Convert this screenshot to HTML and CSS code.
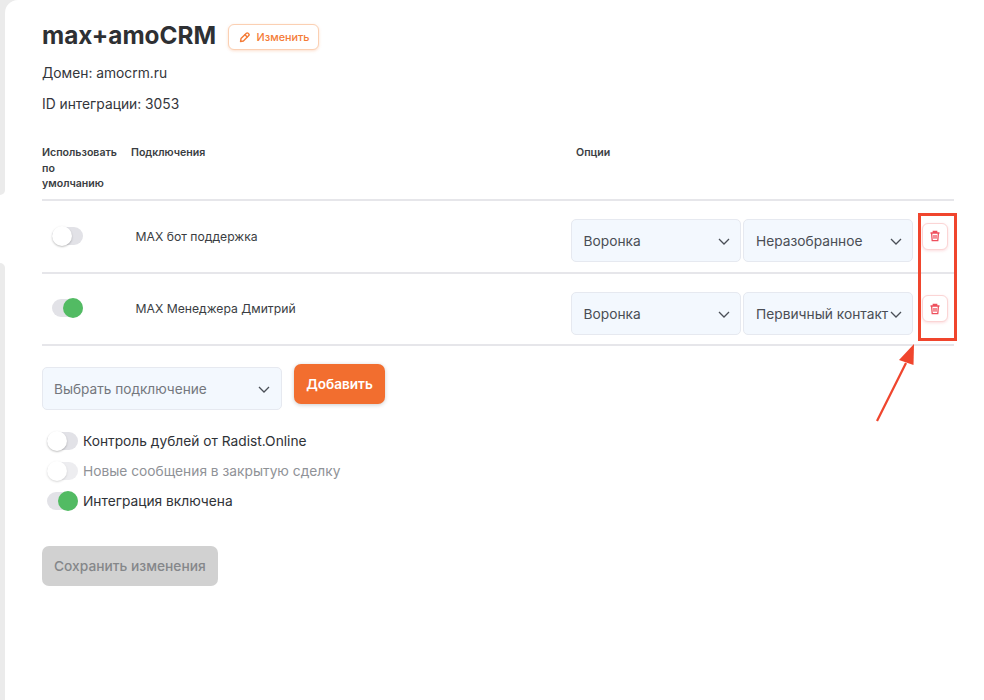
FILE: index.html
```html
<!DOCTYPE html>
<html lang="ru">
<head>
<meta charset="utf-8">
<title>max+amoCRM</title>
<link rel="stylesheet" href="styles.css">
</head>
<body>
<div class="rail rail-top"></div>
<div class="rail rail-bottom"></div>
<main class="page">
  <div class="title-row">
    <h1 class="title">max+amoCRM</h1>
    <button class="edit-btn" type="button">
      <svg class="edit-icon" viewBox="0 0 12 12" width="12" height="12" fill="none" stroke="#f47b36" stroke-width="1.4" stroke-linejoin="round" stroke-linecap="round"><path d="M1.5 10.5 2 7.6 7.4 2.2a1.2 1.2 0 0 1 1.7 0l.7.7a1.2 1.2 0 0 1 0 1.7L4.4 10z"/><path d="M6 3.8 8.2 6"/></svg>
      <span>Изменить</span>
    </button>
  </div>
  <p class="meta meta-domain">Домен: amocrm.ru</p>
  <p class="meta meta-id">ID интеграции: 3053</p>

  <div class="table-head">
    <div class="col-default">Использовать по умолчанию</div>
    <div class="col-conn">Подключения</div>
    <div class="col-opts">Опции</div>
  </div>

  <div class="row">
    <div class="cell-toggle"><span class="toggle"><span class="knob"></span></span></div>
    <div class="cell-name">MAX бот поддержка</div>
    <div class="select select-a"><span>Воронка</span><svg class="chev" viewBox="0 0 12 7" width="12" height="7"><path d="M1 1l5 5 5-5" fill="none" stroke="#4a4f57" stroke-width="1.3"/></svg></div>
    <div class="select select-b"><span>Неразобранное</span><svg class="chev" viewBox="0 0 12 7" width="12" height="7"><path d="M1 1l5 5 5-5" fill="none" stroke="#4a4f57" stroke-width="1.3"/></svg></div>
    <button class="del-btn" type="button"><svg viewBox="0 0 12 12" width="12" height="12" fill="none" stroke="#ee4f5c" stroke-width="1.3"><path d="M1.5 3h9M4.3 3V1.5h3.4V3M2.6 3l.6 7.7h5.6L9.4 3M5 5v3.8M7 5v3.8"/></svg></button>
  </div>
  <div class="row">
    <div class="cell-toggle"><span class="toggle on"><span class="knob"></span></span></div>
    <div class="cell-name">MAX Менеджера Дмитрий</div>
    <div class="select select-a"><span>Воронка</span><svg class="chev" viewBox="0 0 12 7" width="12" height="7"><path d="M1 1l5 5 5-5" fill="none" stroke="#4a4f57" stroke-width="1.3"/></svg></div>
    <div class="select select-b"><span>Первичный контакт</span><svg class="chev" viewBox="0 0 12 7" width="12" height="7"><path d="M1 1l5 5 5-5" fill="none" stroke="#4a4f57" stroke-width="1.3"/></svg></div>
    <button class="del-btn" type="button"><svg viewBox="0 0 12 12" width="12" height="12" fill="none" stroke="#ee4f5c" stroke-width="1.3"><path d="M1.5 3h9M4.3 3V1.5h3.4V3M2.6 3l.6 7.7h5.6L9.4 3M5 5v3.8M7 5v3.8"/></svg></button>
  </div>

  <div class="add-row">
    <div class="select select-add"><span>Выбрать подключение</span><svg class="chev" viewBox="0 0 12 7" width="12" height="7"><path d="M1 1l5 5 5-5" fill="none" stroke="#4a4f57" stroke-width="1.3"/></svg></div>
    <button class="add-btn" type="button">Добавить</button>
  </div>

  <div class="switches">
    <div class="switch-row"><span class="toggle"><span class="knob"></span></span><span>Контроль дублей от Radist.Online</span></div>
    <div class="switch-row disabled"><span class="toggle"><span class="knob"></span></span><span>Новые сообщения в закрытую сделку</span></div>
    <div class="switch-row"><span class="toggle on"><span class="knob"></span></span><span>Интеграция включена</span></div>
  </div>

  <button class="save-btn" type="button">Сохранить изменения</button>
</main>

<div class="callout"></div>
<svg class="arrow" viewBox="0 0 60 90" width="60" height="90"><path d="M2 83 31 25" stroke="#f0452d" stroke-width="2.2" fill="none"/><path d="M39 6 38.500 27 24 22z" fill="#f0452d"/></svg>
</body>
</html>
```
FILE: styles.css
```css
* { box-sizing: border-box; }
html, body { margin: 0; height: 100%; }
body {
  background: #fff;
  font-family: Inter, "Noto Sans", sans-serif;
  color: #2f3237;
  overflow: hidden;
  width: 984px;
  height: 700px;
  position: relative;
}
.rail { position: absolute; left: 0; width: 5px; background: #ebebeb; }
.rail-top { top: 0; height: 195px; width: 5px; border-bottom-right-radius: 5px; }
.rail-top::before { content: ""; position: absolute; left: 0; top: 0; width: 18px; height: 18px; background: #ebebeb; }
.rail-top::after { content: ""; position: absolute; left: 5px; top: 0; width: 14px; height: 18px; background: #fff; border-top-left-radius: 13px; }
.rail-bottom { top: 263px; bottom: 0; border-top-right-radius: 5px; }
.page { padding: 20px 30px 0 42px; width: 984px; }
.title-row { display: flex; align-items: center; gap: 11.5px; height: 30px; }
.title { margin: 0; font-size: 24.3px; font-weight: 700; line-height: 30px; color: #2e3033; }
.edit-btn {
  display: flex; align-items: center; gap: 6px;
  height: 26px; width: 91px; margin-top: 4px; padding: 0 0 0 10px;
  background: #fff; border: 1px solid #fbd0b3; border-radius: 6px;
  box-shadow: 0 1px 3px rgba(244,123,54,.25);
  color: #f47b36; font: 500 10.8px Inter, sans-serif;
}
.meta { margin: 0; font-size: 13.8px; line-height: 20px; color: #33363b; }
.meta-domain { margin-top: 13px; }
.meta-id { margin-top: 11px; }
.table-head {
  display: flex; width: 912px; height: 57px; margin-top: 30px; padding-top: 1px;
  border-bottom: 2px solid #e6e6ea;
  font-size: 10.6px; font-weight: 600; line-height: 15.5px; color: #3a3d42;
}
.col-default { width: 89px; padding-right: 13px; }
.col-conn { width: 445px; }
.row {
  display: flex; align-items: center; width: 912px; height: 72.5px;
  border-bottom: 2px solid #e6e6ea; padding-top: 1px;
}
.cell-toggle { width: 93.5px; padding-left: 9.5px; display: flex; margin-top: -2px; }
.cell-name { width: 435.5px; font-size: 12.2px; color: #3a3d42; margin-top: -1px; }
.toggle { position: relative; display: inline-block; width: 31px; height: 18px; border-radius: 9px; background: #e2e2e7; flex: none; }
.knob { position: absolute; left: 0; top: -1px; width: 20px; height: 20px; border-radius: 50%; background: #fff; box-shadow: 0 1px 2px rgba(0,0,0,.25); }
.toggle.on .knob { left: 11px; background: #52bb63; box-shadow: none; }
.select {
  display: flex; align-items: center; justify-content: space-between;
  height: 43px; background: #f3f8fe; border: 1px solid #e6e9f0; border-radius: 5px;
  font-size: 13.75px; color: #4a4e55;
}
.row .select { margin-top: 8px; }
.row .select span { padding-top: 1px; }
.select-a { width: 169.5px; padding: 0 10px 0 11.5px; }
.select-b { width: 170px; margin-left: 2.5px; padding: 0 10px 0 12px; }
.chev { flex: none; margin-top: 2px; }
.del-btn {
  display: flex; align-items: center; justify-content: center;
  width: 26px; height: 27px; margin: -1px 0 0 8.5px; padding: 0;
  background: #fff; border: 1px solid #fbd5d5; border-radius: 6px;
  box-shadow: 0 1px 3px rgba(238,79,92,.2);
}
.add-row { display: flex; gap: 12px; margin-top: 18px; align-items: flex-start; }
.select-add { width: 240px; padding: 0 11px; color: #74777d; margin-top: 3px; font-size: 13.65px; }
.add-btn {
  width: 91px; height: 40px; background: #f26e2f; border: 0; border-radius: 7px;
  box-shadow: 0 1px 4px rgba(0,0,0,.2);
  color: #fff; font: 600 13.6px Inter, sans-serif;
}
.switches { margin-top: 21px; padding-left: 5px; display: flex; flex-direction: column; gap: 10px; }
.switch-row { display: flex; align-items: center; gap: 5px; height: 20px; font-size: 13.75px; color: #2f3237; }
.switch-row.disabled { color: #8f9297; }
.switch-row.disabled .toggle { opacity: .6; }
.save-btn {
  display: block; margin-top: 35px; width: 176px; height: 40px; padding: 0 0 0 12px;
  text-align: left;
  background: #d1d1d1; border: 0; border-radius: 7px;
  color: #85878a; font: 500 13.75px Inter, sans-serif;
}
.callout { position: absolute; left: 918px; top: 213px; width: 39px; height: 128px; border: 3px solid #f0452d; }
.arrow { position: absolute; left: 875px; top: 338px; }
```
